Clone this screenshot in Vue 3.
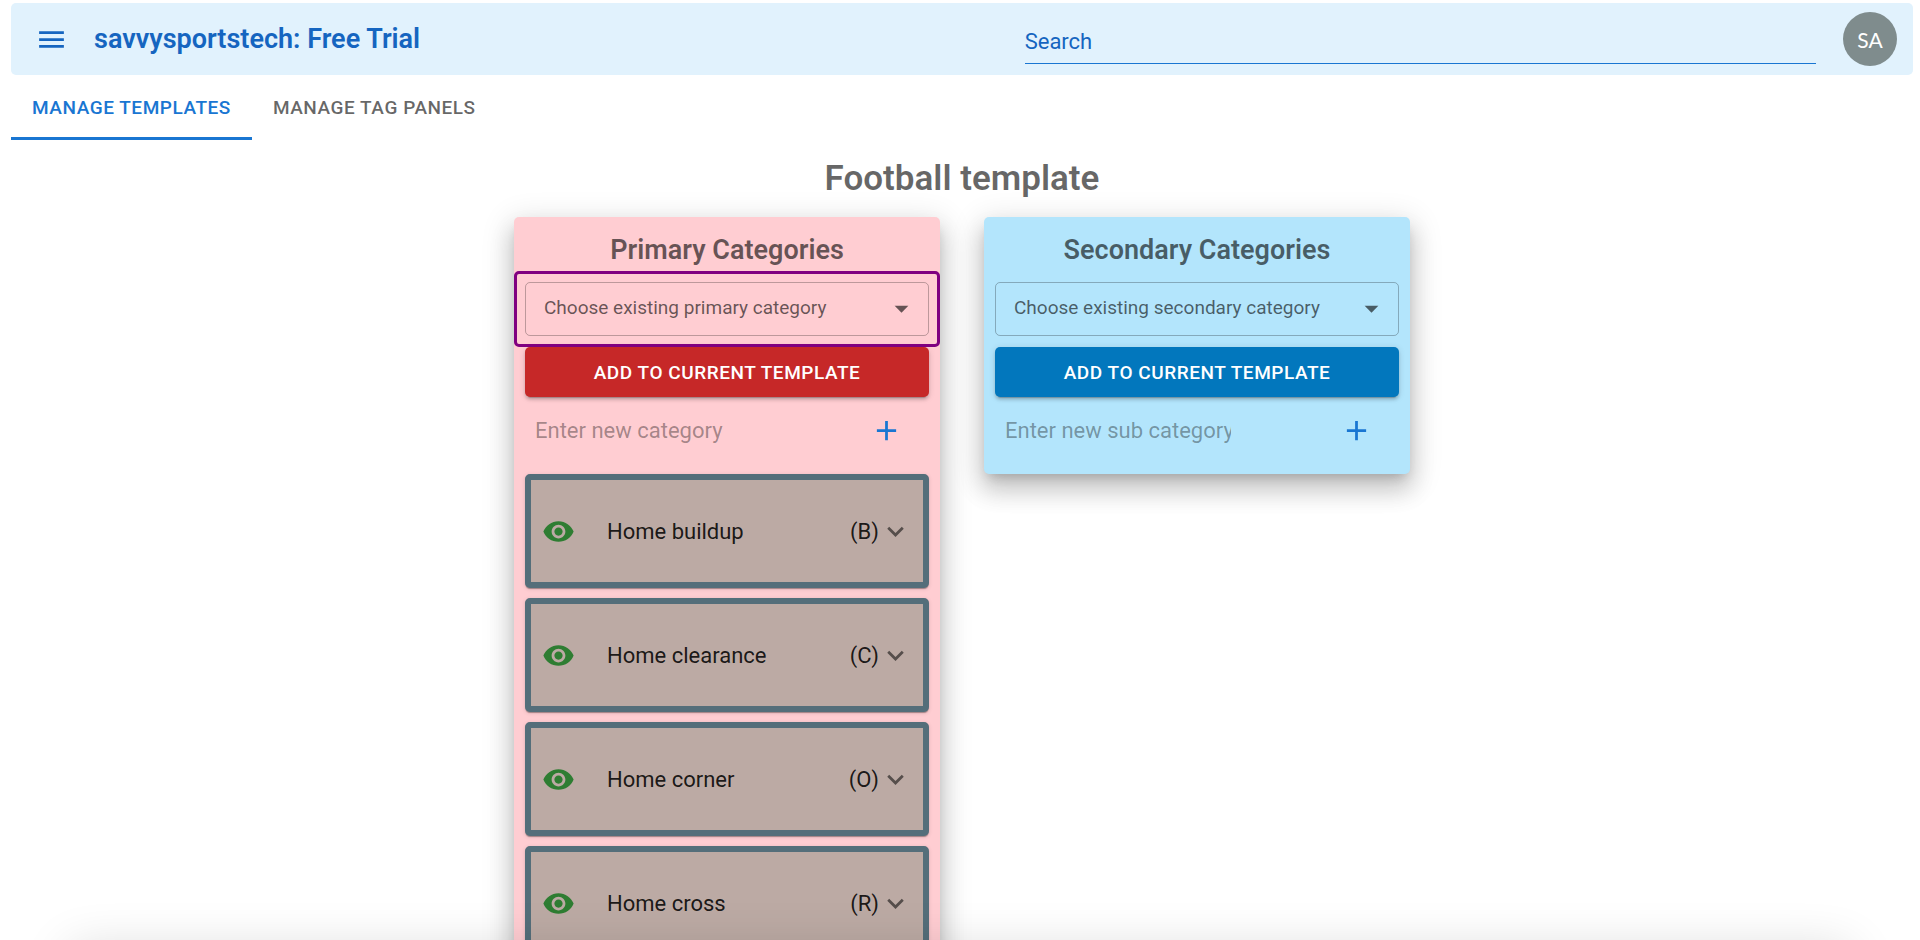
<script setup>
import { ref } from 'vue'

const tabs = ['Manage Templates', 'Manage Tag Panels']
const activeTab = ref(0)

const panels = [
  {
    id: 'primary',
    title: 'Primary Categories',
    choose: 'Choose existing primary category',
    placeholder: 'Enter new category',
    highlighted: true,
    items: [
      { name: 'Home buildup', key: 'B' },
      { name: 'Home clearance', key: 'C' },
      { name: 'Home corner', key: 'O' },
      { name: 'Home cross', key: 'R' },
    ],
  },
  {
    id: 'secondary',
    title: 'Secondary Categories',
    choose: 'Choose existing secondary category',
    placeholder: 'Enter new sub category',
    highlighted: false,
    items: [],
  },
]
</script>

<template>
  <div class="page">
    <header class="appbar">
      <button class="icon-btn menu" type="button" aria-label="Menu">
        <svg viewBox="0 0 24 24"><path d="M3 18h18v-2H3v2zm0-5h18v-2H3v2zm0-7v2h18V6H3z" /></svg>
      </button>
      <h1 class="brand">savvysportstech: Free Trial</h1>
      <input class="search" type="text" placeholder="Search" aria-label="Search" />
      <button class="avatar" type="button">SA</button>
    </header>

    <nav class="tabs" role="tablist">
      <button
        v-for="(tab, i) in tabs"
        :key="tab"
        class="tab"
        :class="{ active: i === activeTab }"
        type="button"
        role="tab"
        :aria-selected="i === activeTab"
        @click="activeTab = i"
      >{{ tab }}</button>
    </nav>

    <main class="content">
      <h2 class="heading">Football template</h2>
      <div class="panels">
        <section v-for="p in panels" :key="p.id" class="panel" :class="p.id">
          <h3 class="panel-title">{{ p.title }}</h3>
          <div class="picker" :class="{ highlighted: p.highlighted }">
            <select class="select" :aria-label="p.choose">
              <option>{{ p.choose }}</option>
            </select>
            <svg class="caret" viewBox="0 0 24 24"><path d="M7 10l5 5 5-5z" /></svg>
          </div>
          <button class="add-btn" type="button">Add to current template</button>
          <div class="new-row">
            <input class="new-input" type="text" :placeholder="p.placeholder" :aria-label="p.placeholder" />
            <button class="icon-btn plus" type="button" aria-label="Add">
              <svg viewBox="0 0 24 24"><path d="M19 13h-6v6h-2v-6H5v-2h6V5h2v6h6v2z" /></svg>
            </button>
          </div>
          <ul v-if="p.items.length" class="items">
            <li v-for="item in p.items" :key="item.name" class="item">
              <button class="icon-btn eye" type="button" aria-label="Toggle visibility">
                <svg viewBox="0 0 24 24"><path d="M12 4.5C7 4.5 2.73 7.61 1 12c1.73 4.39 6 7.5 11 7.5s9.27-3.11 11-7.5c-1.73-4.39-6-7.5-11-7.5zM12 17c-2.76 0-5-2.24-5-5s2.24-5 5-5 5 2.24 5 5-2.24 5-5 5zm0-8c-1.66 0-3 1.34-3 3s1.34 3 3 3 3-1.34 3-3-1.34-3-3-3z" /></svg>
              </button>
              <span class="item-name">{{ item.name }}</span>
              <span class="item-key">({{ item.key }})</span>
              <button class="icon-btn expand" type="button" aria-label="Expand">
                <svg viewBox="0 0 24 24"><path d="M16.59 8.59L12 13.17 7.41 8.59 6 10l6 6 6-6z" /></svg>
              </button>
            </li>
          </ul>
        </section>
      </div>
    </main>
    <div class="edge-shade"></div>
  </div>
</template>

<style>
body {
  background: #fff;
}
</style>

<style scoped>
.page {
  box-sizing: border-box;
  height: 100vh;
  overflow: hidden;
  padding: 3px 7px 0 11px;
  font-family: Roboto, "Liberation Sans", sans-serif;
  color: rgba(0, 0, 0, 0.87);
}
.page * {
  box-sizing: border-box;
}
button,
input,
select {
  font-family: inherit;
  margin: 0;
  border: 0;
  background: none;
}
button {
  cursor: pointer;
}
h1,
h2,
h3 {
  margin: 0;
  font-weight: 600;
}
.icon-btn {
  display: flex;
  flex: none;
  padding: 0;
}
.icon-btn svg {
  width: 33px;
  height: 33px;
  fill: currentColor;
}
.appbar {
  display: flex;
  align-items: center;
  height: 72px;
  padding: 0 16px 0 24px;
  border-radius: 5px;
  background: #e1f2fd;
  color: #1565c0;
}
.menu {
  color: #1565c0;
}
.brand {
  flex: 1;
  padding-left: 26px;
  font-size: 27px;
  line-height: 36px;
}
.search {
  width: 42.5%;
  height: 45px;
  margin-top: 5px;
  padding: 0;
  border-bottom: 1px solid #1976d2;
  border-radius: 0;
  outline: 0;
  color: #1565c0;
  font-size: 22px;
}
.search::placeholder {
  color: #1565c0;
}
.avatar {
  flex: none;
  width: 54px;
  height: 54px;
  margin-left: 27px;
  padding: 0;
  border-radius: 50%;
  background: #7f8c8d;
  color: #fff;
  font-family: Lato, sans-serif;
  font-size: 21px;
}
.tabs {
  display: flex;
}
.tab {
  height: 65px;
  padding: 3px 21px 0;
  border-bottom: 3px solid transparent;
  color: rgba(0, 0, 0, 0.6);
  font-size: 19px;
  font-weight: 500;
  letter-spacing: 0.02857em;
  text-transform: uppercase;
}
.tab.active {
  border-bottom-color: #1976d2;
  color: #1976d2;
}
.heading {
  padding: 18px 0 17px;
  color: rgba(0, 0, 0, 0.6);
  font-size: 35px;
  line-height: 42px;
  text-align: center;
}
.panels {
  display: flex;
  flex-wrap: wrap;
  align-items: flex-start;
  justify-content: center;
  gap: 44px;
}
.panel {
  width: 426px;
  border-radius: 5px;
  box-shadow: 0 7px 11px -5px rgba(0, 0, 0, 0.2), 0 16px 23px 2px rgba(0, 0, 0, 0.14), 0 7px 30px 5px rgba(0, 0, 0, 0.12);
}
.primary {
  background: #ffcdd2;
}
.secondary {
  background: #b3e5fc;
}
.panel-title {
  padding: 15px 0 3px;
  color: rgba(0, 0, 0, 0.6);
  font-size: 27px;
  line-height: 36px;
  text-align: center;
}
.picker {
  position: relative;
  padding: 8px;
  border: 3px solid transparent;
  border-radius: 5px;
}
.picker.highlighted {
  border-color: #800080;
}
.select {
  display: block;
  appearance: none;
  width: 100%;
  height: 54px;
  padding: 0 50px 3px 18px;
  border: 1px solid rgba(0, 0, 0, 0.26);
  border-radius: 5px;
  color: rgba(0, 0, 0, 0.6);
  font-size: 19px;
}
.caret {
  position: absolute;
  top: 18px;
  right: 19px;
  width: 33px;
  height: 33px;
  fill: rgba(0, 0, 0, 0.6);
  pointer-events: none;
}
.add-btn {
  display: block;
  width: calc(100% - 22px);
  height: 50px;
  margin: 0 11px;
  border-radius: 5px;
  box-shadow: 0 4px 1px -3px rgba(0, 0, 0, 0.2), 0 3px 3px rgba(0, 0, 0, 0.14), 0 1px 7px rgba(0, 0, 0, 0.12);
  color: #fff;
  font-size: 19px;
  font-weight: 500;
  letter-spacing: 0.02857em;
  text-transform: uppercase;
}
.primary .add-btn {
  background: #c62828;
}
.secondary .add-btn {
  background: #0277bd;
}
.new-row {
  display: flex;
  align-items: center;
  justify-content: space-between;
  height: 66px;
  margin-bottom: 11px;
  padding: 0 37px 0 21px;
}
.new-input {
  width: 226px;
  padding: 0;
  outline: 0;
  font-size: 22px;
}
.new-input::placeholder {
  color: rgba(0, 0, 0, 0.37);
}
.plus {
  color: #1976d2;
}
.items {
  display: flex;
  flex-direction: column;
  gap: 10px;
  margin: 0;
  padding: 0 11px 11px;
  list-style: none;
}
.item {
  display: flex;
  align-items: center;
  height: 114px;
  padding: 0 11px;
  border: 6px solid #546e7a;
  border-radius: 5px;
  background: #bcaaa4;
  box-shadow: 0 2px 1px -1px rgba(0, 0, 0, 0.2), 0 1px 1px rgba(0, 0, 0, 0.14), 0 1px 4px rgba(0, 0, 0, 0.12);
  font-size: 22px;
}
.eye {
  color: #2e7d32;
}
.item-name {
  flex: 1;
  padding-left: 32px;
}
.expand {
  color: rgba(0, 0, 0, 0.54);
}
.edge-shade {
  position: fixed;
  right: 70px;
  bottom: -50px;
  left: 70px;
  height: 40px;
  box-shadow: 0 0 50px rgba(0, 0, 0, 0.16);
  pointer-events: none;
}
</style>
